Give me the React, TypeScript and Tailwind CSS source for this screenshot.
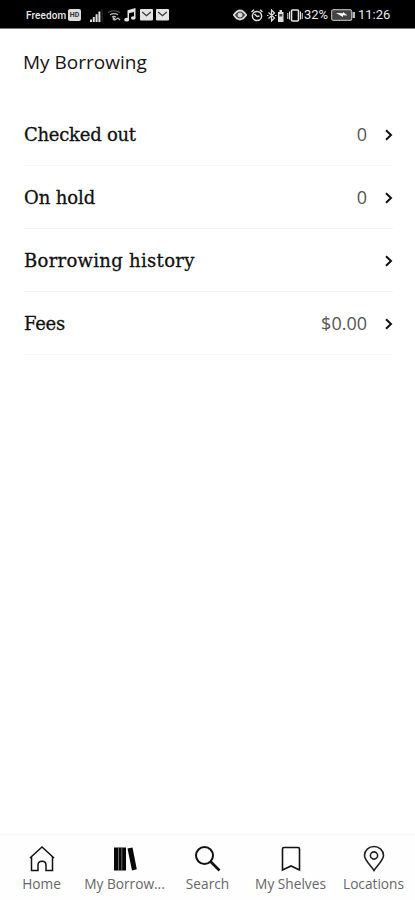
import type { ReactNode } from "react";

function Chevron() {
  return (
    <svg className="mt-[2px]" width="9" height="12" viewBox="0 0 9 12" fill="none" stroke="#111" strokeWidth="2">
      <path d="M2 1.200 7 6 2 10.800" />
    </svg>
  );
}

function Envelope() {
  return (
    <svg width="13" height="12" viewBox="0 0 13 12">
      <rect width="13" height="11.5" rx="1" fill="#e4e4e4" />
      <path d="m2.2 3 4.3 3.7L10.800 3" fill="none" stroke="#333" strokeWidth="1.1" />
    </svg>
  );
}

function StatusBar() {
  return (
    <header className="flex h-[29px] items-center border-b border-[#777] bg-black pt-[2px] pr-[24px] pl-[26px] font-['Roboto',sans-serif] text-[#e8e8e8]">
      <span className="w-[42px] text-[10px] font-medium tracking-[0.1px] whitespace-nowrap">Freedom</span>
      <span className="flex h-[12px] w-[13px] items-center justify-center rounded-[2px] bg-[#ddd] text-[7px] font-bold text-[#333]">HD</span>
      <svg className="ml-[9px]" width="13" height="13" viewBox="0 0 13 13" fill="#dedede">
        <path d="M0 10.500h2V13H0zM2.800 8h2v5h-2zM5.600 5.300h2V13h-2zM8.400 2.500h2V13h-2z" />
        <path d="M11.600 0h1v13h-1z" fill="#333" />
      </svg>
      <svg className="ml-[4px]" width="14" height="13" viewBox="0 0 14 13" fill="none" stroke="#bbb" strokeWidth="1.200">
        <path d="M1 3.500Q7 0 13 3.500" stroke="#555" />
        <path d="M3 5.800q4-2.400 8 0M5 8q2-1.300 4 0" />
        <path d="m6 8 2 3 3-2 2 2" />
        <circle cx="7" cy="10" r=".8" fill="#ddd" />
      </svg>
      <svg className="ml-[3px]" width="12" height="14" viewBox="0 0 12 14" fill="#e4e4e4">
        <path d="M3.500 2.300 11.500 0v10H10V4L5 5.300V12H3.500z" />
        <ellipse cx="2.700" cy="11.700" rx="2.500" ry="1.900" />
        <ellipse cx="9.200" cy="10" rx="2.300" ry="1.800" />
      </svg>
      <span className="ml-[4px] flex gap-[3px]"><Envelope /><Envelope /></span>

      <span className="ml-auto flex items-center">
        <svg width="14" height="12" viewBox="0 0 14 12" fill="none" stroke="#d8d8d8" strokeWidth="1.800">
          <path d="M.8 6Q7-3 13.200 6 7 15 .8 6Z" fill="#444" />
          <circle cx="7" cy="6" r="2" fill="#ddd" stroke="#ddd" strokeWidth="1" />
        </svg>
        <svg className="ml-[4px]" width="12" height="13" viewBox="0 0 12 13" fill="none" stroke="#e0e0e0" strokeWidth="1.500">
          <circle cx="6" cy="7" r="4.600" />
          <path d="M.5 3 3 .8M11.500 3 9 .8M3.500 5 6 7.500 8.500 7" />
        </svg>
        <svg className="ml-[4px]" width="17" height="13" viewBox="0 0 17 13" fill="none" stroke="#dcdcdc" strokeWidth="1.200">
          <path d="m1.500 3.500 6 5.500-3 3V1l3 3-6 5.500M0 6.500h1.500M8 6.500h1.500" />
          <path d="M11 3h5.500v10H11zM12.500 1h2.500v2h-2.500z" fill="#dcdcdc" stroke="none" />
          <path d="M12.300 5h3v2.500h-3z" fill="#444" stroke="none" />
        </svg>
        <svg className="ml-[3px]" width="16" height="13" viewBox="0 0 16 13" fill="none" stroke="#e2e2e2" strokeWidth="1.600">
          <rect x="4.500" y="1" width="7" height="11" rx="1" />
          <path d="M.8 4v6M2.500 2.500v8M13.500 2.500v8M15.200 4v6" strokeWidth="1" />
        </svg>
        <span className="ml-[1px] w-[26px] text-[13px] whitespace-nowrap">32%</span>
        <svg className="ml-[1px]" width="24" height="12" viewBox="0 0 24 12">
          <rect x=".6" y=".6" width="20" height="10.800" rx="2" fill="#444" stroke="#aaa" strokeWidth="1.200" />
          <path d="M21.500 3H24v6h-2.500z" fill="#bbb" />
          <path d="m5 4 7 .3V3l4.500 3.500-4.500-.2V8z" fill="#fff" />
        </svg>
        <span className="ml-[3px] w-[33px] text-[13px] whitespace-nowrap">11:26</span>
      </span>
    </header>
  );
}

function Row({ label, value, spacing }: { label: string; value?: string; spacing: string }) {
  return (
    <button className="flex h-[63px] w-full items-center border-b border-[#f4f4f4] text-left">
      <span className={`font-['DejaVu_Serif',serif] text-[18px] whitespace-nowrap text-[#111] [-webkit-text-stroke:0.3px_#111] ${spacing}`}>{label}</span>
      <span className="mt-px mr-[17px] ml-auto font-['Open_Sans',sans-serif] text-[18px] text-[#555]">{value}</span>
      <Chevron />
    </button>
  );
}

function Tab({ label, children }: { label: string; children: ReactNode }) {
  return (
    <button className="flex w-[83px] flex-col items-center pt-[10px]">
      <span className="flex h-[27px] items-center justify-center">{children}</span>
      <span className="mt-[2px] text-[13.700px] leading-[19px] whitespace-nowrap text-[#666]">{label}</span>
    </button>
  );
}

export default function App() {
  return (
    <div className="flex h-[900px] w-[415px] flex-col overflow-hidden bg-white font-['Open_Sans',sans-serif]">
      <StatusBar />
      <h1 className="h-[74px] pt-[19px] pl-[23px] text-[19px] leading-[28px] text-[#151515]">My Borrowing</h1>
      <main className="flex-1 pr-[22px] pl-[24px]">
        <Row label="Checked out" value="0" spacing="tracking-[-0.25px]" />
        <Row label="On hold" value="0" spacing="tracking-[-0.1px]" />
        <Row label="Borrowing history" spacing="tracking-[0.3px]" />
        <Row label="Fees" value="$0.00" spacing="tracking-[-0.3px]" />
      </main>
      <nav className="flex h-[66px] border-t border-[#f8f8f8] bg-[#fefefe]">
        <Tab label="Home">
          <svg width="26" height="27" viewBox="0 0 26 27" fill="none" stroke="#111" strokeWidth="1.500">
            <path d="M1 13 13 2l12 11M2.500 12v13.500H9V20c0-5 8-5 8 0v5.500h6.500V12" />
          </svg>
        </Tab>
        <Tab label="My Borrow...">
          <svg width="24" height="24" viewBox="0 0 24 24" fill="#080808">
            <path d="M1 .500h12V23.500H1zM14.500 1.500l5-1L23.800 22.300 19 23.500z" />
            <path d="M5.500 .5v23M8.800 .5v23" stroke="#777" strokeWidth=".9" />
          </svg>
        </Tab>
        <Tab label="Search">
          <svg width="27" height="27" viewBox="0 0 27 27" fill="none" stroke="#111">
            <circle cx="10.500" cy="10.500" r="8.500" strokeWidth="2" />
            <path d="m16.500 16.500 9 9" strokeWidth="2.600" />
          </svg>
        </Tab>
        <Tab label="My Shelves">
          <svg width="20" height="26" viewBox="0 0 20 26" fill="none" stroke="#111" strokeWidth="1.600">
            <path d="M1.500 3q0-1.500 1.500-1.500h14q1.500 0 1.500 1.500v21L10 20l-8.500 4z" />
          </svg>
        </Tab>
        <Tab label="Locations">
          <svg width="22" height="27" viewBox="0 0 22 27" fill="none" stroke="#222" strokeWidth="1.600">
            <path d="M11 25.500C8 21 1.500 15 1.500 10.500a9.500 9 0 0 1 19 0C20.500 15 14 21 11 25.500Z" />
            <circle cx="11" cy="10.500" r="3.600" />
          </svg>
        </Tab>
      </nav>
    </div>
  );
}
